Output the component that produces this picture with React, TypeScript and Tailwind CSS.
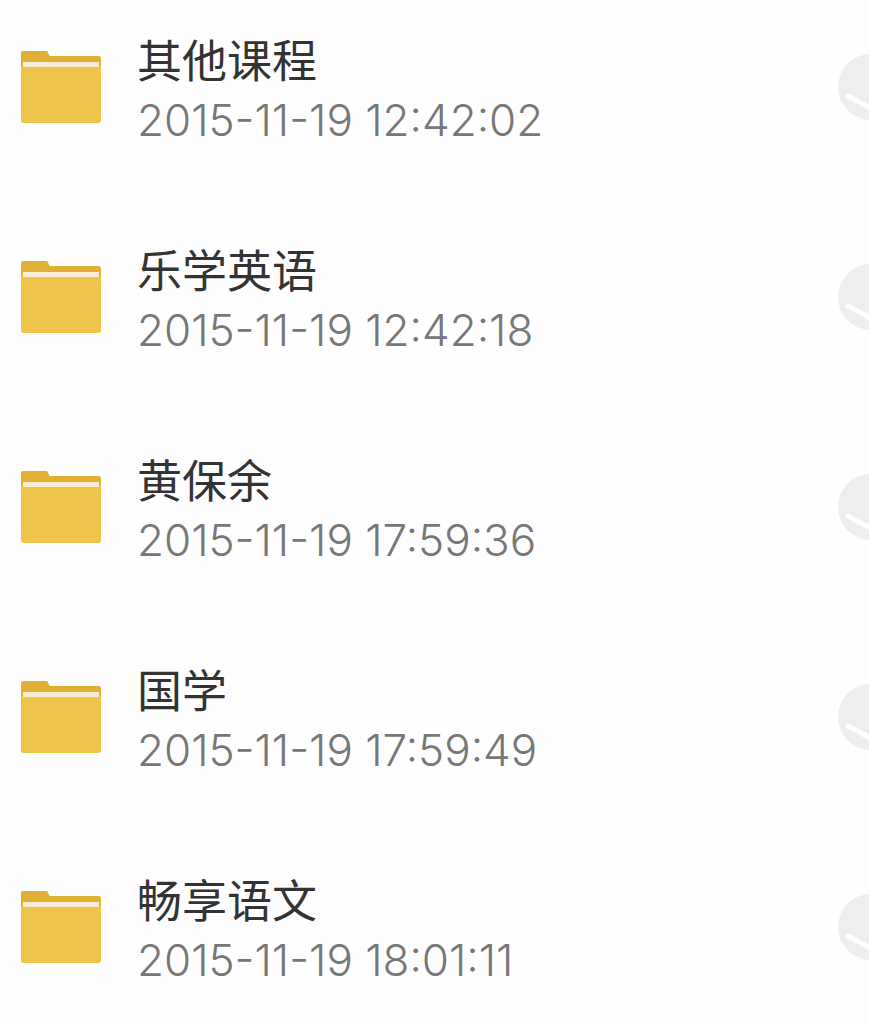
import React from 'react';

const folders = [
  { id: 'folder-1', name: '其他课程', date: '2015-11-19 12:42:02' },
  { id: 'folder-2', name: '乐学英语', date: '2015-11-19 12:42:18' },
  { id: 'folder-3', name: '黄保余', date: '2015-11-19 17:59:36' },
  { id: 'folder-4', name: '国学', date: '2015-11-19 17:59:49' },
  { id: 'folder-5', name: '畅享语文', date: '2015-11-19 18:01:11' }
];

function FolderIcon() {
  return (
    <svg className="h-[72px] w-20 shrink-0" viewBox="0 0 80 72" aria-hidden="true">
      <path
        d="M2 0H24.500C26 0 26.800.6 27.300 2L27.600 3C28 4.400 28.800 5 30 5H77.500C79 5 80 6 80 7.500V30H0V2C0 1 1 0 2 0Z"
        fill="#e0b034"
      />
      <path d="M0 15H80V69.500C80 71 79 72 77.500 72H2.500C1 72 0 71 0 69.500Z" fill="#efc44b" />
      <rect x="2" y="11" width="76" height="5" fill="#f9ecd3" />
    </svg>
  );
}

function SelectCircle({ id }: { id: string }) {
  return (
    <span className="-mr-[35px] grid h-[66px] w-[66px] shrink-0">
      <input
        id={id}
        type="checkbox"
        className="col-start-1 row-start-1 h-full w-full appearance-none rounded-full bg-[#eeeeee] checked:bg-blue-500"
      />
      <svg
        className="pointer-events-none col-start-1 row-start-1 h-full w-full"
        viewBox="0 0 66 66"
        fill="none"
        stroke="#ffffff"
        strokeWidth="5"
        strokeLinecap="round"
        aria-hidden="true"
      >
        <path d="M10 42L32 54L56 20" />
      </svg>
    </span>
  );
}

export default function App() {
  return (
    <main className="min-h-screen overflow-hidden bg-[#fefefe] font-['Inter','Noto_Sans_CJK_SC',sans-serif]">
      <ul className="flex flex-col gap-9">
        {folders.map((folder) => (
          <li key={folder.id} className="flex h-[174px] items-center pl-[21px]">
            <FolderIcon />
            <label htmlFor={folder.id} className="ml-9 flex min-w-0 flex-1 flex-col pt-2">
              <span className="text-[45px] leading-[58px] text-[#333333]">{folder.name}</span>
              <span className="text-[44px] leading-[58px] font-light text-[#777777]">{folder.date}</span>
            </label>
            <SelectCircle id={folder.id} />
          </li>
        ))}
      </ul>
    </main>
  );
}
